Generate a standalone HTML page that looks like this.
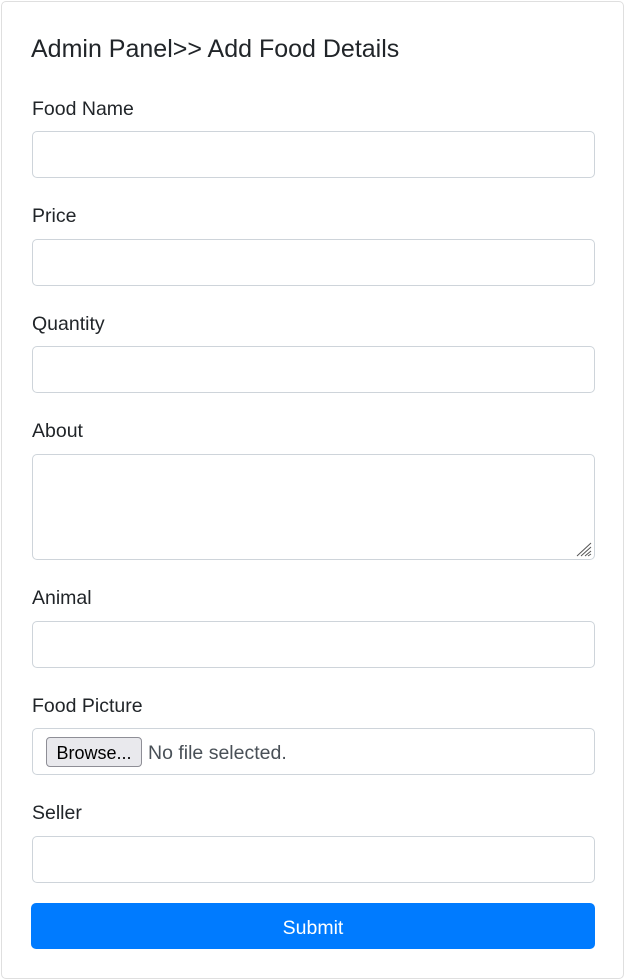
<!DOCTYPE html>
<html><head><style>
body{margin:0;width:625px;height:980px;background:#fff;font-family:"Liberation Sans",sans-serif;color:#212529;position:relative;overflow:hidden}
.card{position:absolute;left:1px;top:1px;width:621px;height:976px;border:1px solid #dfdfdf;border-radius:5px}
.t{position:absolute;left:32px;font-size:19.5px;line-height:22px}
.h{position:absolute;left:31px;top:34px;font-size:25px;line-height:30px}
.in{position:absolute;left:32px;width:561px;border:1px solid #ced4da;border-radius:5px;background:#fff}
.btn{position:absolute;left:31px;top:903px;width:564px;height:46px;background:#007bff;border-radius:5px;color:#fff;font-size:19.5px;text-align:center;line-height:50px}
.br{position:absolute;left:46px;top:737px;width:94px;height:28px;border:1px solid #8e8e96;border-radius:4px;background:#e9e9ed;font-size:18px;line-height:30px;text-align:center;color:#000}
.nf{position:absolute;left:148px;top:742px;font-size:19.5px;color:#495057;line-height:22px}
</style></head><body>
<div class="card"></div>
<div class="h">Admin Panel&gt;&gt; Add Food Details</div>
<div class="t" style="top:98px">Food Name</div>
<div class="in" style="top:131px;height:45px"></div>
<div class="t" style="top:205px">Price</div>
<div class="in" style="top:239px;height:45px"></div>
<div class="t" style="top:313px">Quantity</div>
<div class="in" style="top:346px;height:45px"></div>
<div class="t" style="top:420px">About</div>
<div class="in" style="top:454px;height:104px"></div>
<svg style="position:absolute;left:575px;top:541px" width="18" height="16"><path d="M16 2L2 15M16 6L6 15M16 10L10 15M16 13L13 15" stroke="#555" stroke-width="1"/></svg>
<div class="t" style="top:587px">Animal</div>
<div class="in" style="top:621px;height:45px"></div>
<div class="t" style="top:695px">Food Picture</div>
<div class="in" style="top:728px;height:45px"></div>
<div class="br">Browse...</div>
<div class="nf">No file selected.</div>
<div class="t" style="top:802px">Seller</div>
<div class="in" style="top:836px;height:45px"></div>
<div class="btn">Submit</div>
</body></html>
